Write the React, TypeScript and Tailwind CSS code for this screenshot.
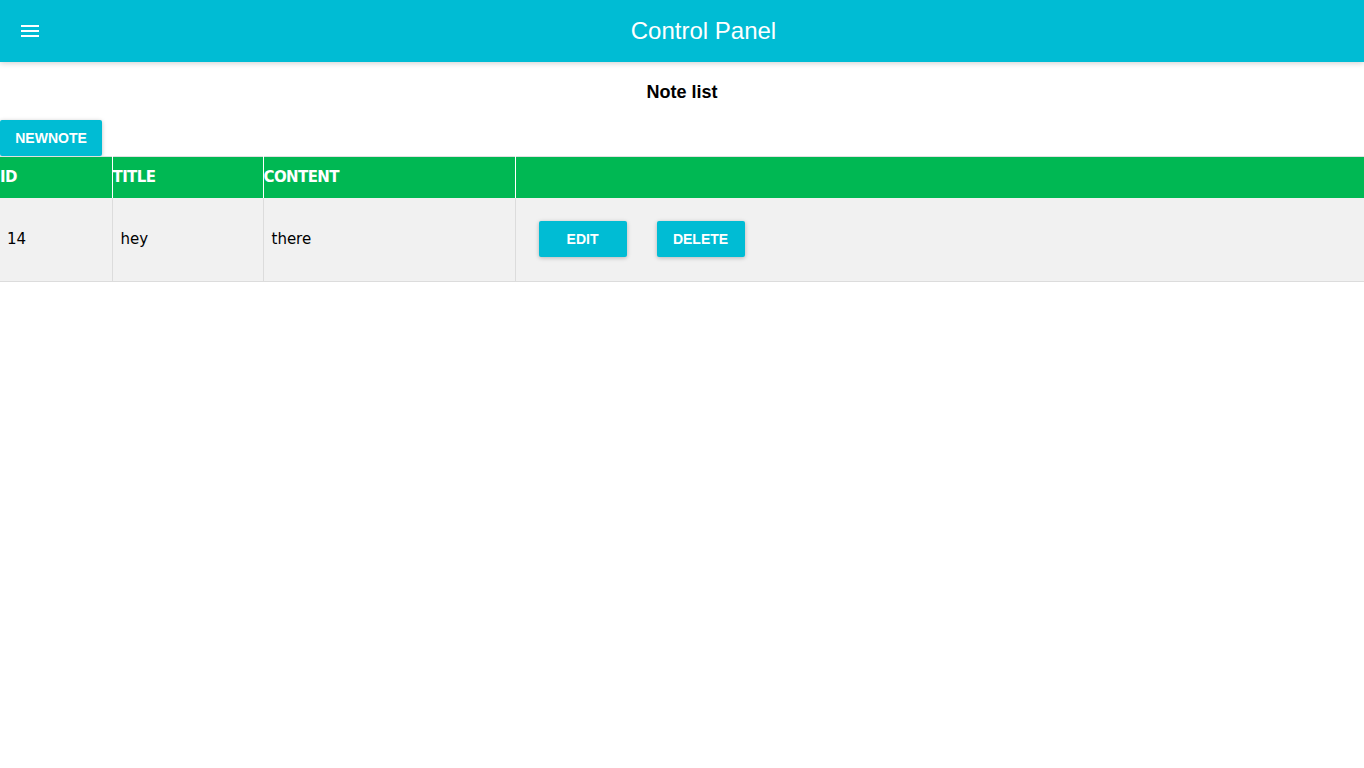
import React from "react";

export default function App() {
  const btn =
    "bg-[#00BCD4] text-white font-bold text-[14px] rounded-[2px] shadow-[0_1px_4px_rgba(0,0,0,0.25)] flex items-center justify-center";
  return (
    <div className="min-h-[768px] bg-white" style={{ fontFamily: '"Liberation Sans", Arial, sans-serif' }}>
      <header className="h-[62px] bg-[#00BCD4] flex items-center shadow-[0_1px_6px_rgba(0,0,0,0.2)] relative z-10">
        <div className="w-[64px] pl-[21px] flex flex-col gap-[3px]">
          <span className="block w-[18px] h-[2px] bg-white" />
          <span className="block w-[18px] h-[2px] bg-white" />
          <span className="block w-[18px] h-[2px] bg-white" />
        </div>
        <h1 className="flex-1 text-center text-white text-[24px] pr-[21px] leading-none">Control Panel</h1>
      </header>
      <h2 className="text-center font-bold text-[18px] text-black mt-[20px] leading-[21px]">Note list</h2>
      <button className={`${btn} w-[102px] h-[36px] mt-[17px]`}>NEWNOTE</button>
      <table
        className="w-full border-collapse border-t border-[#e0e0e0]"
        style={{ fontFamily: '"DejaVu Sans", Verdana, sans-serif' }}
      >
        <thead>
          <tr className="bg-[#00B853] text-white h-[41px] text-left">
            <th className="w-[112px] p-0 text-[15px] font-bold tracking-[-0.6px] border-r border-white">ID</th>
            <th className="w-[151px] p-0 text-[15px] font-bold tracking-[-0.6px] border-r border-white">TITLE</th>
            <th className="w-[252px] p-0 text-[15px] font-bold tracking-[-0.6px] border-r border-white">CONTENT</th>
            <th className="p-0"></th>
          </tr>
        </thead>
        <tbody>
          <tr className="bg-[#F1F1F1] h-[84px] border-b border-[#dcdcdc] text-[15px] text-black">
            <td className="pl-[7px] border-r border-[#dcdcdc]">14</td>
            <td className="pl-[8px] border-r border-[#dcdcdc]">hey</td>
            <td className="pl-[8px] border-r border-[#dcdcdc]">there</td>
            <td className="pl-[23px]" style={{ fontFamily: '"Liberation Sans", Arial, sans-serif' }}>
              <div className="flex gap-[30px]">
                <button className={`${btn} w-[88px] h-[36px]`}>EDIT</button>
                <button className={`${btn} w-[88px] h-[36px]`}>DELETE</button>
              </div>
            </td>
          </tr>
        </tbody>
      </table>
    </div>
  );
}
